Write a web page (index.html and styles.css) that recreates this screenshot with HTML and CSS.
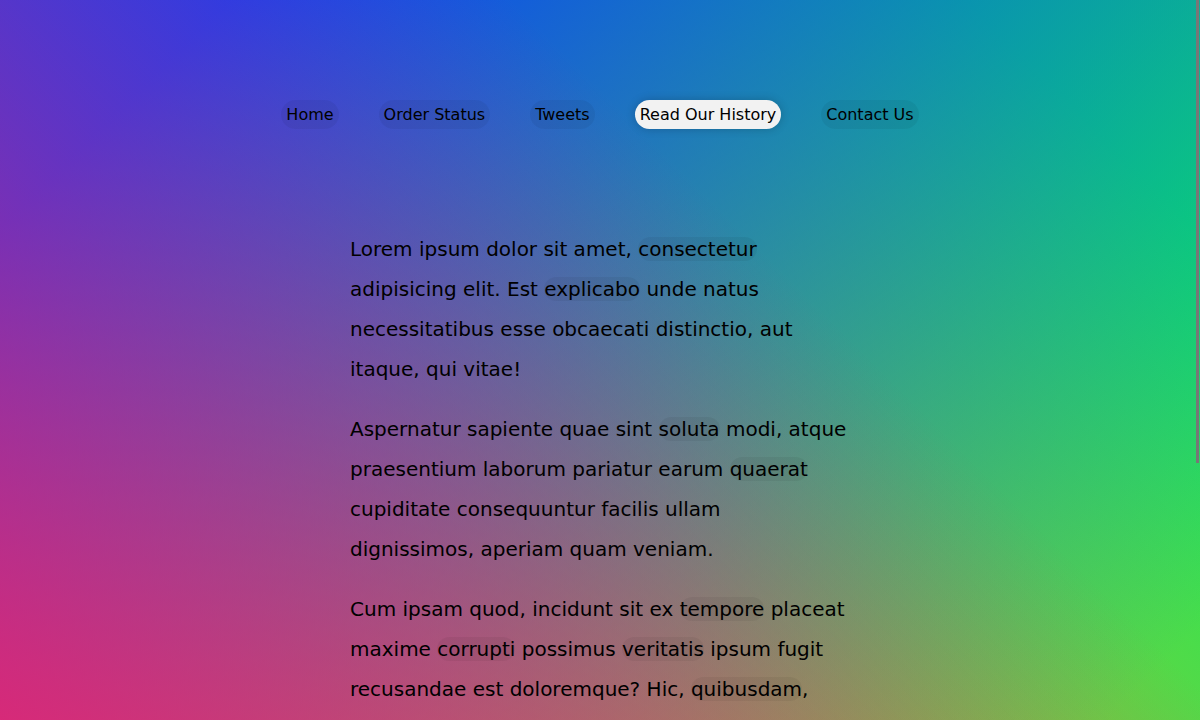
FILE: index.html
```
<!DOCTYPE html>
<html lang="en">
<head>
<meta charset="utf-8">
<title>Follow Along Links</title>
<link rel="stylesheet" href="styles.css">
</head>
<body>
<nav>
  <ul class="menu">
    <li><a href="#">Home</a></li>
    <li><a href="#">Order Status</a></li>
    <li><a href="#">Tweets</a></li>
    <li><a href="#" class="current">Read Our History</a></li>
    <li><a href="#">Contact Us</a></li>
  </ul>
</nav>
<main class="wrapper">
  <p>Lorem ipsum dolor sit amet, <a href="#">consectetur</a> adipisicing elit. Est <a href="#">explicabo</a> unde natus necessitatibus esse obcaecati distinctio, aut itaque, qui vitae!</p>
  <p>Aspernatur sapiente quae sint <a href="#">soluta</a> modi, atque praesentium laborum pariatur earum <a href="#">quaerat</a> cupiditate consequuntur facilis ullam dignissimos, aperiam quam veniam.</p>
  <p>Cum ipsam quod, incidunt sit ex <a href="#">tempore</a> placeat maxime <a href="#">corrupti</a> possimus <a href="#">veritatis</a> ipsum fugit recusandae est doloremque? Hic, <a href="#">quibusdam</a>, nulla.</p>
  <p>Esse quibusdam, ad, ducimus cupiditate <a href="#">nulla</a>, quae magni odit <a href="#">totam</a> ut consequatur eveniet sunt quam provident sapiente dicta neque quod.</p>
  <p>Aliquam <a href="#">dicta</a> sequi culpa fugiat <a href="#">consequuntur</a> pariatur optio ad minima, maxime <a href="#">odio</a>, distinctio magni impedit tempore enim repellendus <a href="#">repudiandae</a> quas!</p>
</main>
<div class="scroll-thumb" aria-hidden="true"></div>
</body>
</html>
```
FILE: styles.css
```
html {
  box-sizing: border-box;
}

*, *::before, *::after {
  box-sizing: inherit;
}

body {
  min-height: 100vh;
  margin: 0;
  font-family: "DejaVu Sans", sans-serif;
  background:
    linear-gradient(45deg, hsla(340, 100%, 55%, 1) 0%, hsla(340, 100%, 55%, 0) 70%),
    linear-gradient(135deg, hsla(225, 95%, 50%, 1) 10%, hsla(225, 95%, 50%, 0) 80%),
    linear-gradient(225deg, hsla(140, 90%, 50%, 1) 10%, hsla(140, 90%, 50%, 0) 80%),
    linear-gradient(315deg, hsla(35, 95%, 55%, 1) 100%, hsla(35, 95%, 55%, 0) 70%);
}

.wrapper {
  margin: 0 auto;
  max-width: 500px;
  font-size: 20px;
  line-height: 2;
}

a {
  text-decoration: none;
  color: black;
  background: rgba(0, 0, 0, 0.05);
  border-radius: 20px;
}

.menu {
  padding: 0;
  display: flex;
  list-style: none;
  justify-content: center;
  margin: 100px 0;
}

.menu a {
  display: inline-block;
  padding: 5px;
  margin: 0 20px;
}

.menu .current {
  background: #f2f2f2;
  box-shadow: 0 0 10px rgba(0, 0, 0, 0.2);
}

.scroll-thumb {
  position: fixed;
  top: 0;
  right: 1px;
  width: 3px;
  height: 463px;
  background: #777;
}
```
